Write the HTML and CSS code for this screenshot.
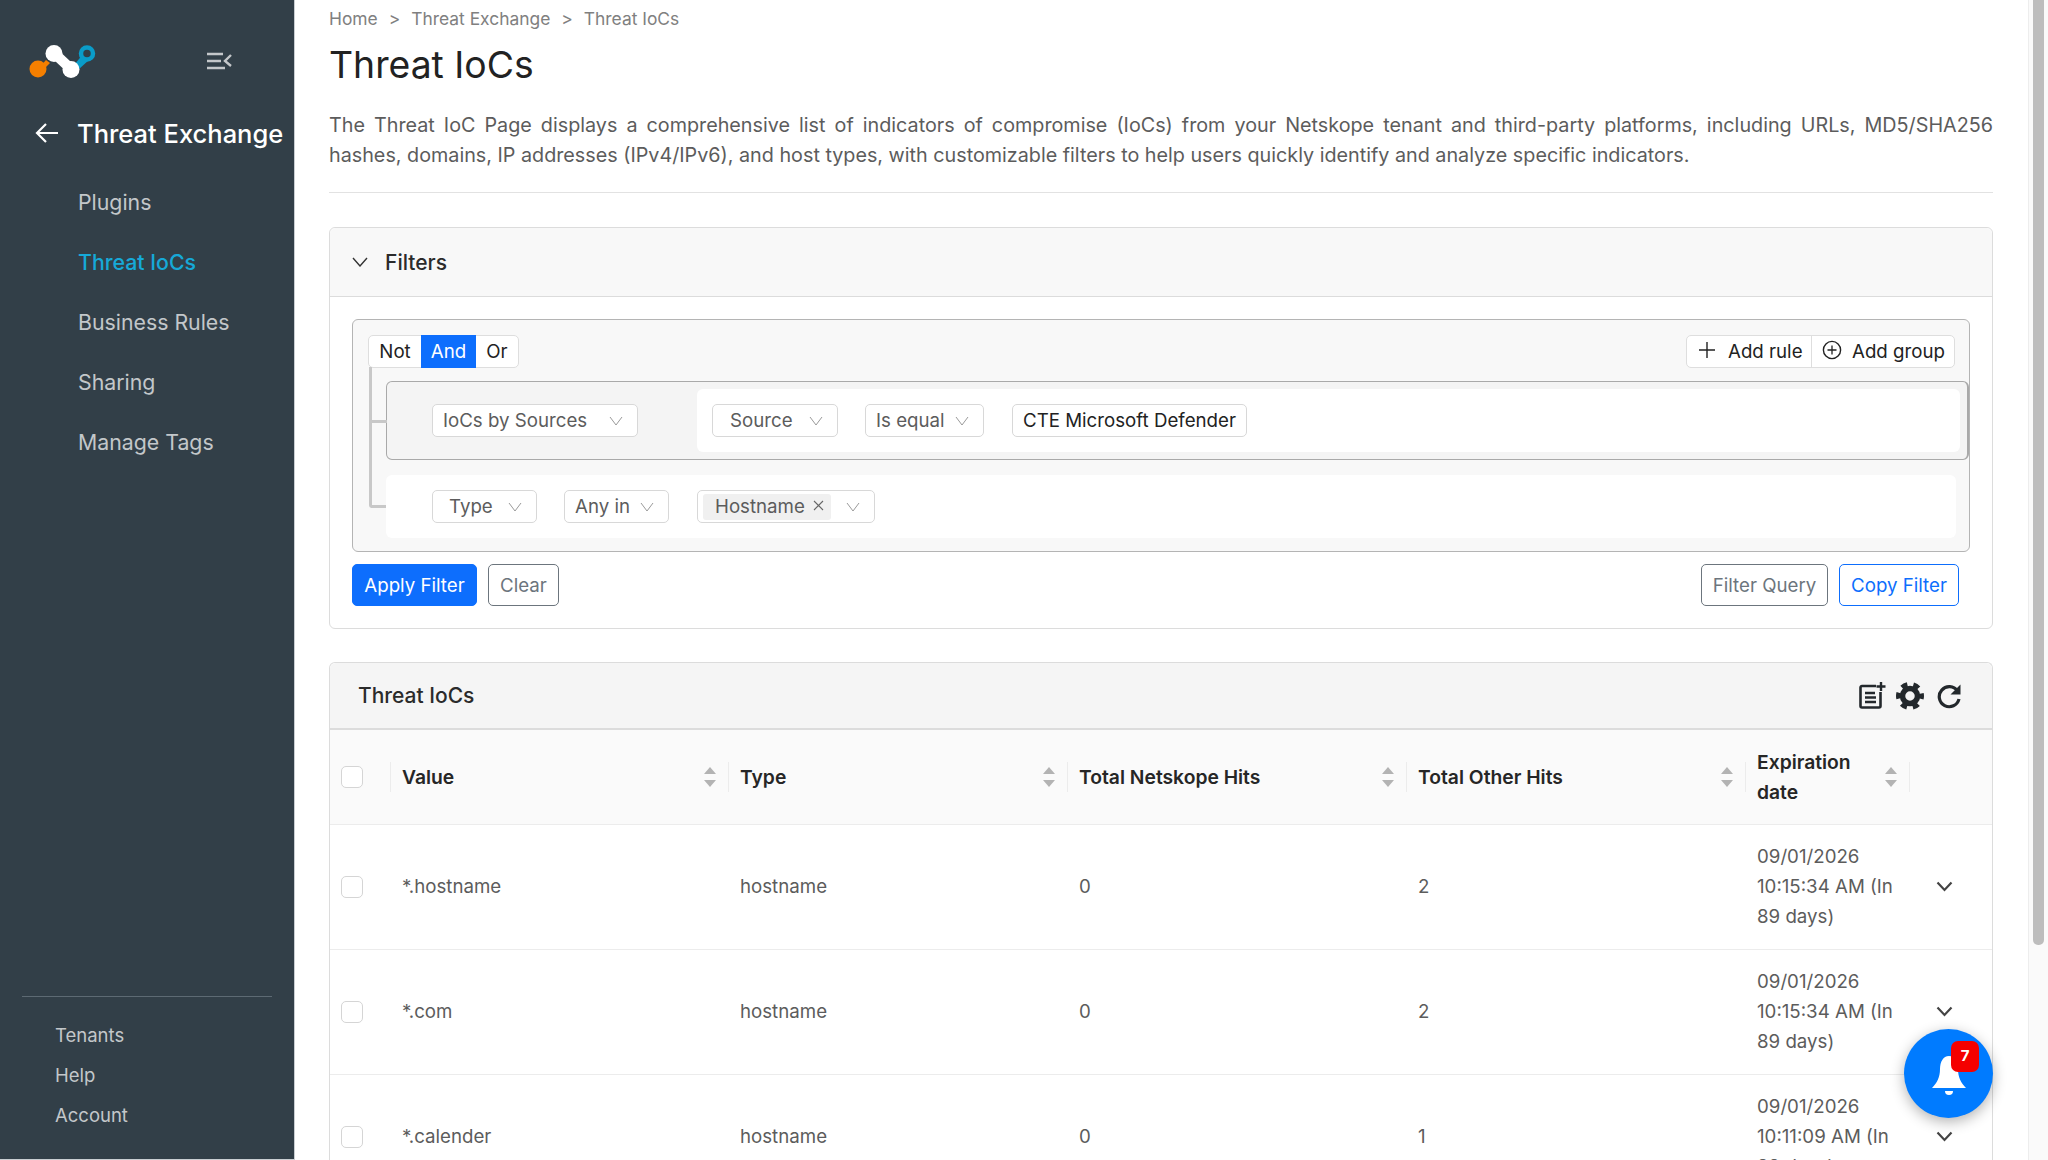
FILE: index.html
```html
<!DOCTYPE html>
<html lang="en">
<head>
    <meta charset="UTF-8">
    <title>Threat IoCs</title>
    <link rel="stylesheet" href="styles.css">
</head>
<body>
<div class="app">
    <aside class="sidebar">
        <div class="brand">
            <svg class="logo" width="68" height="34" viewBox="0 0 68 34">
                <path d="M9 24 L17 15 L21 18 L12 27Z" fill="#f57f00"/>
                <circle cx="9" cy="24" r="8.500" fill="#f57f00"/>
                <path d="M45 20 L55 8 L61 14 L49 25Z" fill="#0a9cc9"/>
                <circle cx="58" cy="8.500" r="6" fill="#323f48" stroke="#0a9cc9" stroke-width="4.500"/>
                <path d="M25 8 L42 24" stroke="#fff" stroke-width="10"/>
                <circle cx="25" cy="8.500" r="8.500" fill="#fff"/>
                <circle cx="42" cy="24.500" r="8.500" fill="#fff"/>
            </svg>
            <svg class="menu-toggle" width="25" height="18" viewBox="0 0 25 18">
                <path d="M0 2H16M0 9H14M0 16H18" stroke="#c4c7ca" stroke-width="2.400"/>
                <path d="M24 3L18 9L24 14" stroke="#c4c7ca" stroke-width="2.400" fill="none"/>
            </svg>
        </div>
        <div class="section-title">
            <svg width="24" height="22" viewBox="0 0 24 22"><path d="M23 11H2M11 2L2 11L11 20" stroke="#fff" stroke-width="2.200" fill="none"/></svg>
            <span>Threat Exchange</span>
        </div>
        <nav class="nav">
            <a>Plugins</a>
            <a class="active">Threat IoCs</a>
            <a>Business Rules</a>
            <a>Sharing</a>
            <a>Manage Tags</a>
        </nav>
        <div class="side-foot">
            <a>Tenants</a>
            <a>Help</a>
            <a>Account</a>
        </div>
    </aside>

    <main class="main">
        <div class="crumbs"><span>Home</span><i>&gt;</i><span>Threat Exchange</span><i>&gt;</i><span>Threat IoCs</span></div>
        <h1>Threat IoCs</h1>
        <p class="intro">The Threat IoC Page displays a comprehensive list of indicators of compromise (IoCs) from your Netskope tenant and third-party platforms, including URLs, MD5/SHA256 hashes, domains, IP addresses (IPv4/IPv6), and host types, with customizable filters to help users quickly identify and analyze specific indicators.</p>

        <section class="card filters">
            <div class="card-head">
                <svg width="16" height="10" viewBox="0 0 16 10"><path d="M1 1L8 9L15 1" stroke="#333" stroke-width="1.400" fill="none"/></svg>
                <span>Filters</span>
            </div>
            <div class="filter-body">
                <div class="builder">
                    <div class="builder-top">
                        <div class="btn-group">
                            <span class="not">Not</span><span class="and">And</span><span class="or">Or</span>
                        </div>
                        <div class="btn-group add">
                            <span class="add-rule">
                                <svg width="16" height="16" viewBox="0 0 16 16"><path d="M8 0V16M0 8H16" stroke="#222" stroke-width="1.400"/></svg>
                                Add rule</span>
                            <span class="add-group">
                                <svg width="20" height="20" viewBox="0 0 20 20"><circle cx="10" cy="10" r="8.600" fill="none" stroke="#222" stroke-width="1.400"/><path d="M10 5.500V14.500M5.500 10H14.500" stroke="#222" stroke-width="1.300"/></svg>
                                Add group</span>
                        </div>
                    </div>
                    <div class="rules">
                        <div class="rule rule-group">
                            <div class="sel sel-field">IoCs by Sources<svg class="car" viewBox="0 0 14 10"><path d="M1 1L7 9L13 1"/></svg></div>
                            <div class="rule-inner">
                                <div class="sel sel-source">Source<svg class="car" viewBox="0 0 14 10"><path d="M1 1L7 9L13 1"/></svg></div>
                                <div class="sel sel-op">Is equal<svg class="car" viewBox="0 0 14 10"><path d="M1 1L7 9L13 1"/></svg></div>
                                <div class="sel sel-value">CTE Microsoft Defender</div>
                            </div>
                        </div>
                        <div class="rule rule-plain">
                            <div class="sel sel-type">Type<svg class="car" viewBox="0 0 14 10"><path d="M1 1L7 9L13 1"/></svg></div>
                            <div class="sel sel-any">Any in<svg class="car" viewBox="0 0 14 10"><path d="M1 1L7 9L13 1"/></svg></div>
                            <div class="sel sel-multi">
                                <span class="tag">Hostname<svg width="11" height="11" viewBox="0 0 11 11"><path d="M1 1L10 10M10 1L1 10" stroke="#666" stroke-width="1.100"/></svg></span>
                                <svg class="car" viewBox="0 0 14 10"><path d="M1 1L7 9L13 1"/></svg>
                            </div>
                        </div>
                    </div>
                </div>
                <div class="filter-actions">
                    <button class="btn primary">Apply Filter</button>
                    <button class="btn outline">Clear</button>
                    <button class="btn outline push">Filter Query</button>
                    <button class="btn outline-blue">Copy Filter</button>
                </div>
            </div>
        </section>

        <section class="card iocs">
            <div class="card-head table-head">
                <span>Threat IoCs</span>
                <div class="tools">
                    <svg width="27" height="27" viewBox="0 0 27 27">
                        <path d="M17 4H3a1.500 1.500 0 0 0-1.500 1.500V24A1.500 1.500 0 0 0 3 25.500H20A1.500 1.500 0 0 0 21.500 24V10" fill="none" stroke="#23282c" stroke-width="2.600"/>
                        <path d="M6 11H16M6 15.500H17M6 20H17" stroke="#23282c" stroke-width="2.400"/>
                        <path d="M22 0V9M17.500 4.500H26.500" stroke="#23282c" stroke-width="2.400"/>
                    </svg>
                    <svg width="28" height="28" viewBox="0 0 28 28">
                        <circle cx="14" cy="14" r="7.500" fill="none" stroke="#23282c" stroke-width="5.500"/>
                        <circle cx="14" cy="14" r="11.500" fill="none" stroke="#23282c" stroke-width="5" stroke-dasharray="6.030 6.010" stroke-dashoffset="3"/>
                    </svg>
                    <svg class="reload" width="24" height="26" viewBox="0 0 24 26">
                        <path d="M20.500 8A10 10 0 1 0 22 16" fill="none" stroke="#23282c" stroke-width="3.200"/>
                        <path d="M23.500 1.500V11.500H13.500Z" fill="#23282c"/>
                    </svg>
                </div>
            </div>
            <table class="ioc-table">
                <colgroup>
                    <col class="c-check"><col class="c-val"><col class="c-col"><col class="c-col"><col class="c-col"><col class="c-exp"><col>
                </colgroup>
                <thead>
                    <tr>
                        <th><span class="check"></span></th>
                        <th><div class="th-in">Value<span class="sort"></span></div></th>
                        <th><div class="th-in">Type<span class="sort"></span></div></th>
                        <th><div class="th-in">Total Netskope Hits<span class="sort"></span></div></th>
                        <th><div class="th-in">Total Other Hits<span class="sort"></span></div></th>
                        <th><div class="th-in">Expiration<br>date<span class="sort"></span></div></th>
                        <th><div class="th-in"></div></th>
                    </tr>
                </thead>
                <tbody>
                    <tr>
                        <td><span class="check"></span></td><td>*.hostname</td><td>hostname</td><td>0</td><td>2</td>
                        <td>09/01/2026 10:15:34 AM (In 89 days)</td>
                        <td><svg class="expand" width="17" height="11" viewBox="0 0 17 11"><path d="M1.500 1.500L8.500 9L15.500 1.500"/></svg></td>
                    </tr>
                    <tr>
                        <td><span class="check"></span></td><td>*.com</td><td>hostname</td><td>0</td><td>2</td>
                        <td>09/01/2026 10:15:34 AM (In 89 days)</td>
                        <td><svg class="expand" width="17" height="11" viewBox="0 0 17 11"><path d="M1.500 1.500L8.500 9L15.500 1.500"/></svg></td>
                    </tr>
                    <tr>
                        <td><span class="check"></span></td><td>*.calender</td><td>hostname</td><td>0</td><td>1</td>
                        <td>09/01/2026 10:11:09 AM (In 89 days)</td>
                        <td><svg class="expand" width="17" height="11" viewBox="0 0 17 11"><path d="M1.500 1.500L8.500 9L15.500 1.500"/></svg></td>
                    </tr>
                </tbody>
            </table>
        </section>
    </main>

    <div class="scroll-track"><div class="scroll-thumb"></div></div>
</div>

<div class="bell-fab">
    <svg width="34" height="40" viewBox="0 0 34 40">
        <path d="M17 0C11 0 8 6 8 13C8 21 5 27 0 32H34C29 27 26 21 26 13C26 6 23 0 17 0Z" fill="#fff"/>
        <path d="M13 35H21A4 4 0 0 1 13 35Z" fill="#fff"/>
    </svg>
    <span class="badge">7</span>
</div>
</body>
</html>
```

FILE: styles.css
```css
* { box-sizing: border-box; }
html, body { margin: 0; height: 100%; overflow: hidden; }
body { font-family: Inter, "Liberation Sans", sans-serif; font-size: 18.700px; color: #5c5c5c; background: #fff; }

.app { display: flex; height: 1160px; }

/* sidebar */
.sidebar { width: 295px; flex: none; background: #323f48; border-right: 1px solid #c9ced2; border-bottom: 1px solid #c9ced2; display: flex; flex-direction: column; }
.brand { display: flex; align-items: flex-start; padding: 45px 0 0 29px; height: 98px; }
.brand .menu-toggle { margin-left: 110px; margin-top: 7px; }
.section-title { display: flex; align-items: center; padding-left: 35px; height: 36px; margin-top: 17px; color: #fff; font-size: 25.500px; font-weight: 500; }
.section-title span { margin-left: 18px; white-space: nowrap; }
.nav { display: flex; flex-direction: column; margin-top: 21px; padding-left: 78px; }
.nav a { height: 60px; line-height: 60px; font-size: 21.300px; color: #c3c7ca; }
.nav a.active { color: #16a9d8; font-weight: 500; }
.side-foot { margin: auto 22px 0; border-top: 1px solid #5d6a73; padding: 18px 0 24px 33px; display: flex; flex-direction: column; }
.side-foot a { height: 40px; line-height: 40px; font-size: 18.500px; color: #c3c7ca; }

/* main */
.main { width: 1733px; flex: none; padding: 0 35px 0 34px; overflow: hidden; }
.crumbs { font-size: 17.400px; color: #808080; height: 36px; line-height: 37px; white-space: nowrap; }
.crumbs i { font-style: normal; margin: 0 11px; }
h1 { margin: 5px 0 0; font-size: 37.300px; font-weight: 400; line-height: 48px; color: #222; }
.intro { margin: 21px 0 0; padding-bottom: 22px; border-bottom: 1px solid #e2e2e2; font-size: 19.750px; line-height: 30px; text-align: justify; color: #5c5c5c; }

.card { border: 1px solid #dcdcdc; border-radius: 6px; }
.filters { margin-top: 34px; height: 402px; }
.card-head { background: #f8f8f8; border-bottom: 1px solid #dcdcdc; display: flex; align-items: center; height: 69px; padding-left: 22px; font-size: 21px; color: #2b2b2b; border-radius: 6px 6px 0 0; }
.card-head > span { margin-left: 17px; font-weight: 500; }

.filter-body { padding: 22px 23px 0 22px; }
.builder { height: 233px; background: #f8f8f8; border: 1px solid #b4b4b4; border-radius: 6px; padding: 14px 0 0 15px; width: 1618px; }
.builder-top { display: flex; justify-content: space-between; padding-right: 14px; }
.btn-group { display: flex; height: 33px; margin-top: 1px; background: #fff; border: 1px solid #dedede; border-radius: 5px; color: #222; line-height: 31px; }
.btn-group span { display: block; text-align: center; }
.btn-group .not { width: 52px; }
.btn-group .and { width: 55px; background: #0d6efd; color: #fff; height: 33px; margin-top: -1px; line-height: 33px; }
.btn-group .or { width: 42px; }
.btn-group.add span { display: flex; align-items: center; }
.btn-group .add-rule { width: 125px; border-right: 1px solid #dedede; gap: 13px; padding: 0 0 0 12px; }
.btn-group .add-group { width: 142px; gap: 10px; padding: 0 0 0 10px; }
.add-group svg, .add-rule svg { margin-top: -3px; }

.rules { position: relative; margin-top: 13px; padding-left: 18px; }
/* tree lines of the query builder */
.rules::before { content: ""; position: absolute; left: 1px; top: -14px; width: 3px; height: 141px; background: #c8c8c8; border-radius: 0 0 0 3px; }
.rule-group::before, .rule-plain::before { content: ""; position: absolute; left: -15px; width: 15px; height: 3px; background: #c8c8c8; }
.rule-group::before { top: 38px; }
.rule-plain::before { top: 30px; }
.rule { position: relative; display: flex; align-items: center; border-radius: 6px; padding-left: 45px; }
.rule-group { height: 79px; background: #f4f4f4; border: 1px solid #a9a9a9; border-right-width: 2px; }
.rule-inner { margin-left: 59px; background: #fff; border-radius: 6px; flex: 1; height: 63px; margin-right: 7px; display: flex; align-items: center; padding-left: 15px; }
.rule-plain { height: 63px; background: #fff; margin-top: 15px; margin-right: 13px; padding-left: 46px; }

.sel { height: 33px; flex: none; background: #fff; border: 1px solid #d8d8d8; border-radius: 5px; line-height: 31px; color: #5c5c5c; display: flex; align-items: center; white-space: nowrap; position: relative; }
.car { width: 14px; height: 10px; fill: none; stroke: #9a9a9a; stroke-width: 1; margin-left: auto; }
.sel-field { width: 206px; padding: 0 14px 0 10px; }
.sel-source { width: 126px; padding: 0 14px 0 17px; }
.sel-op { width: 119px; margin-left: 27px; padding: 0 14px 0 10px; }
.sel-value { width: 235px; margin-left: 28px; padding-left: 10px; color: #222; }
.sel-type { width: 105px; padding: 0 14px 0 16px; }
.sel-any { width: 105px; margin-left: 27px; padding: 0 14px 0 10px; }
.sel-multi { width: 178px; margin-left: 28px; padding: 0 14px 0 5px; }
.tag { display: flex; align-items: center; gap: 8px; width: 128px; height: 26px; background: #f0f0f0; border-radius: 3px; padding-left: 12px; }
.tag svg { margin-top: -3px; }

.filter-actions { display: flex; margin-top: 12px; padding-right: 10px; gap: 11px; }
.btn { height: 42px; font: inherit; padding: 0; border-radius: 5px; background: #fff; border: 1.500px solid #6c757d; color: #6c757d; }
.btn.primary { width: 125px; background: #0d6efd; border-color: #0d6efd; color: #fff; }
.btn.outline { width: 71px; }
.btn.push { width: 127px; margin-left: auto; }
.btn.outline-blue { width: 120px; border-color: #0d6efd; color: #0d6efd; }

.iocs { margin-top: 33px; height: 600px; border-bottom: none; border-radius: 6px 6px 0 0; }
.table-head { background: #f5f5f5; height: 67px; padding: 0 31px 0 12px; justify-content: space-between; border-bottom: 2px solid #dcdcdc; }
.table-head > span { font-weight: 500; margin-left: 16px; }
.tools { display: flex; align-items: center; gap: 10px; }
.tools .reload { margin-left: 3px; }

.ioc-table { width: 100%; border-collapse: collapse; table-layout: fixed; }
.c-check { width: 60px; }
.c-val { width: 338px; }
.c-col { width: 339px; }
.c-exp { width: 164px; }
.ioc-table th { height: 94px; padding: 0; background: #fafafa; border-bottom: 1px solid #ececec; font-weight: 600; font-size: 19.300px; line-height: 30px; color: #262626; text-align: left; }
.ioc-table td { height: 125px; padding: 17px 12px 17px 12px; border-bottom: 1px solid #ececec; line-height: 30px; color: #5c5c5c; }
.ioc-table td:first-child, .ioc-table th:first-child { padding: 0 0 0 11px; }
.ioc-table td:nth-child(6) { padding-right: 0; }
.ioc-table td:last-child { padding: 0 0 0 27px; }
.th-in { position: relative; min-height: 30px; padding: 0 40px 0 12px; display: flex; align-items: center; flex-wrap: wrap; }
.th-in::before { content: ""; position: absolute; left: 0; top: 50%; margin-top: -15px; width: 1px; height: 30px; background: #ececec; }
.sort { position: absolute; right: 12px; top: 50%; margin-top: -10px; width: 12px; height: 20px; }
.sort::before, .sort::after { content: ""; position: absolute; left: 0; border: 6px solid transparent; }
.sort::before { top: 0; border-bottom: 7px solid #b3b3b3; border-top: 0; }
.sort::after { bottom: 0; border-top: 7px solid #b3b3b3; border-bottom: 0; }
.check { display: block; width: 22px; height: 22px; border: 1px solid #d5d5d5; border-radius: 5px; background: #fff; }
.expand { fill: none; stroke: #444; stroke-width: 2.200; display: block; }

/* scrollbar column */
.scroll-track { flex: 1; background: #fafafa; border-left: 1px solid #ededed; padding-left: 4px; }
.scroll-thumb { width: 11px; height: 945px; background: #bdbdbd; border-radius: 0 0 5px 5px; }

/* floating notification button */
.bell-fab { position: fixed; left: 1904px; top: 1029px; width: 89px; height: 89px; border-radius: 50%; background: #007bff; box-shadow: 0 4px 14px rgba(0, 0, 0, .3); display: flex; align-items: center; justify-content: center; }
.bell-fab svg { margin-top: 4px; }
.badge { position: absolute; left: 47px; top: 12px; width: 28px; height: 31px; border-radius: 7px; background: #f50000; color: #fff; font-size: 15px; font-weight: 700; line-height: 30px; text-align: center; }
```
